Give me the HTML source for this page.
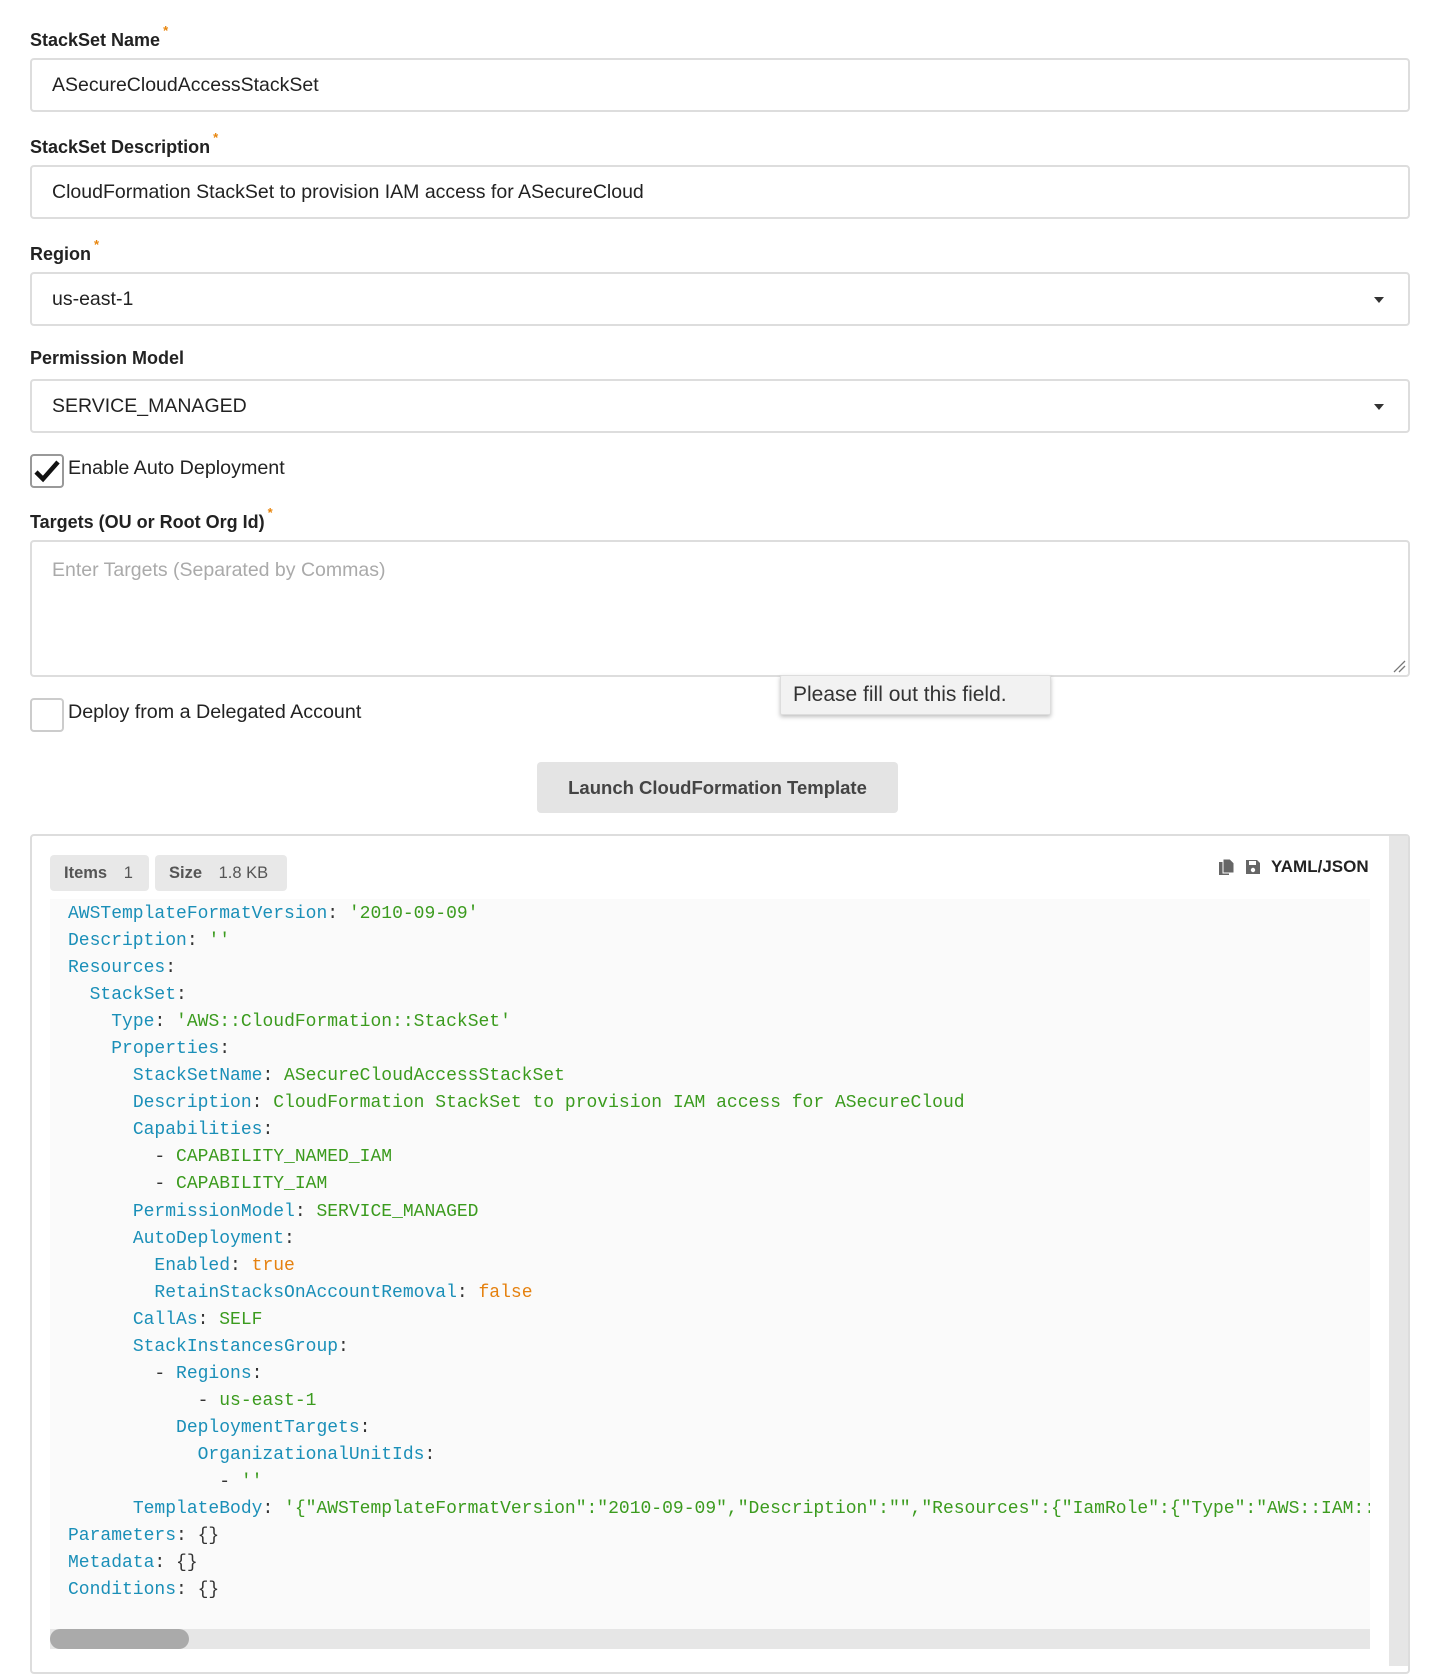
<!DOCTYPE html>
<html><head><meta charset="utf-8"><style>
*{box-sizing:border-box;margin:0;padding:0}
body{width:1438px;height:1662px;background:#fff;font-family:"Liberation Sans",sans-serif;color:#222;position:relative;overflow:hidden}
.abs{position:absolute}
.lbl{position:absolute;left:30px;font-weight:bold;font-size:18px;color:#222}
.lbl sup{color:#e8850c;font-size:13px;position:relative;top:-4px;margin-left:3px}
.inp{position:absolute;left:30px;width:1380px;height:54px;border:2px solid #ddd;border-radius:4px;font-size:19.5px;padding-left:20px;line-height:50px;color:#222}
.caret{position:absolute;right:24px;top:23px;width:0;height:0;border-left:5px solid transparent;border-right:5px solid transparent;border-top:6px solid #333}
.cb{position:absolute;left:30px;width:34px;height:34px;border:2px solid #ccc;border-radius:4px;background:#fff}
.cbt{position:absolute;left:68px;font-size:19.7px}
.code{position:absolute;left:68px;top:901px;font-family:"Liberation Mono",monospace;font-size:18px;line-height:27.04px;white-space:pre;color:#333}
.k{color:#1a8fb8}.s{color:#3b9b1e}.b{color:#e5810f}
</style></head><body>
<div class="lbl" style="top:27px">StackSet Name<sup>*</sup></div>
<div class="inp" style="top:58px">ASecureCloudAccessStackSet</div>
<div class="lbl" style="top:134px">StackSet Description<sup>*</sup></div>
<div class="inp" style="top:165px">CloudFormation StackSet to provision IAM access for ASecureCloud</div>
<div class="lbl" style="top:241px">Region<sup>*</sup></div>
<div class="inp" style="top:272px">us-east-1<div class="caret"></div></div>
<div class="lbl" style="top:348px">Permission Model</div>
<div class="inp" style="top:379px">SERVICE_MANAGED<div class="caret"></div></div>
<div class="cb" style="top:454px;border-color:#999"><svg width="30" height="30" viewBox="0 0 30 30" style="position:absolute;left:0;top:0"><path d="M4 16 L11 23 L26 6" stroke="#111" stroke-width="4.5" fill="none"/></svg></div>
<div class="cbt" style="top:457px">Enable Auto Deployment</div>
<div class="lbl" style="top:509px">Targets (OU or Root Org Id)<sup>*</sup></div>
<div class="inp" style="top:540px;height:137px;line-height:normal;padding-top:17px;color:#aaa">Enter Targets (Separated by Commas)
<svg width="14" height="14" style="position:absolute;right:2px;bottom:2px"><path d="M2 13L13 2M7 13L13 7" stroke="#777" stroke-width="1.3"/></svg></div>
<div class="abs" style="left:780px;top:675px;width:271px;height:40px;background:#f2f2f2;border:1px solid #ddd;border-radius:2px;box-shadow:0 2px 4px rgba(0,0,0,.25);font-size:21px;line-height:38px;padding-left:12px;color:#333">Please fill out this field.</div>
<div class="cb" style="top:698px"></div>
<div class="cbt" style="top:701px">Deploy from a Delegated Account</div>
<div class="abs" style="left:537px;top:762px;width:361px;height:51px;background:#e4e4e4;border-radius:4px;font-size:18.5px;font-weight:bold;color:#444;text-align:center;line-height:51px">Launch CloudFormation Template</div>
<div class="abs" style="left:30px;top:834px;width:1380px;height:840px;border:2px solid #ddd;border-radius:4px;background:#fff"></div>
<div class="abs" style="left:1389px;top:836px;width:19px;height:830px;background:#e6e6e6"></div>
<div class="abs" style="left:50px;top:855px;width:99px;height:36px;background:#e8e8e8;border-radius:4px;font-size:16.5px;font-weight:bold;color:#555;line-height:36px;padding-left:14px">Items <span style="font-weight:normal;margin-left:12px">1</span></div>
<div class="abs" style="left:155px;top:855px;width:132px;height:36px;background:#e8e8e8;border-radius:4px;font-size:16.5px;font-weight:bold;color:#555;line-height:36px;padding-left:14px">Size <span style="font-weight:normal;margin-left:12px">1.8 KB</span></div>
<svg class="abs" style="left:1218px;top:858px" width="18" height="18" viewBox="0 0 18 18"><rect x="1" y="4" width="10" height="13" fill="#666"/><path d="M5 1h7l4 4v10H5z" fill="#666" stroke="#fff" stroke-width="1"/></svg>
<svg class="abs" style="left:1245px;top:859px" width="16" height="16" viewBox="0 0 16 16"><path d="M1 1h11l3 3v11H1z" fill="#666"/><rect x="4" y="2" width="7" height="4" fill="#fff"/><circle cx="8" cy="11" r="2.2" fill="#fff"/></svg>
<div class="abs" style="left:1271px;top:857px;font-size:17px;font-weight:bold;color:#222">YAML/JSON</div>
<div class="abs" style="left:50px;top:899px;width:1320px;height:730px;background:#fafafa"></div>
<div class="code"><span class="k">AWSTemplateFormatVersion</span>: <span class="s">'2010-09-09'</span>
<span class="k">Description</span>: <span class="s">''</span>
<span class="k">Resources</span>:
  <span class="k">StackSet</span>:
    <span class="k">Type</span>: <span class="s">'AWS::CloudFormation::StackSet'</span>
    <span class="k">Properties</span>:
      <span class="k">StackSetName</span>: <span class="s">ASecureCloudAccessStackSet</span>
      <span class="k">Description</span>: <span class="s">CloudFormation StackSet to provision IAM access for ASecureCloud</span>
      <span class="k">Capabilities</span>:
        - <span class="s">CAPABILITY_NAMED_IAM</span>
        - <span class="s">CAPABILITY_IAM</span>
      <span class="k">PermissionModel</span>: <span class="s">SERVICE_MANAGED</span>
      <span class="k">AutoDeployment</span>:
        <span class="k">Enabled</span>: <span class="b">true</span>
        <span class="k">RetainStacksOnAccountRemoval</span>: <span class="b">false</span>
      <span class="k">CallAs</span>: <span class="s">SELF</span>
      <span class="k">StackInstancesGroup</span>:
        - <span class="k">Regions</span>:
            - <span class="s">us-east-1</span>
          <span class="k">DeploymentTargets</span>:
            <span class="k">OrganizationalUnitIds</span>:
              - <span class="s">''</span>
      <span class="k">TemplateBody</span>: <span class="s">'{"AWSTemplateFormatVersion":"2010-09-09","Description":"","Resources":{"IamRole":{"Type":"AWS::IAM::</span>
<span class="k">Parameters</span>: {}
<span class="k">Metadata</span>: {}
<span class="k">Conditions</span>: {}</div>
<div class="abs" style="left:1370px;top:899px;width:19px;height:760px;background:#fff"></div>
<div class="abs" style="left:50px;top:1629px;width:1320px;height:20px;background:#e6e6e6"></div>
<div class="abs" style="left:50px;top:1629px;width:139px;height:20px;background:#aaa;border-radius:10px"></div>
</body></html>
